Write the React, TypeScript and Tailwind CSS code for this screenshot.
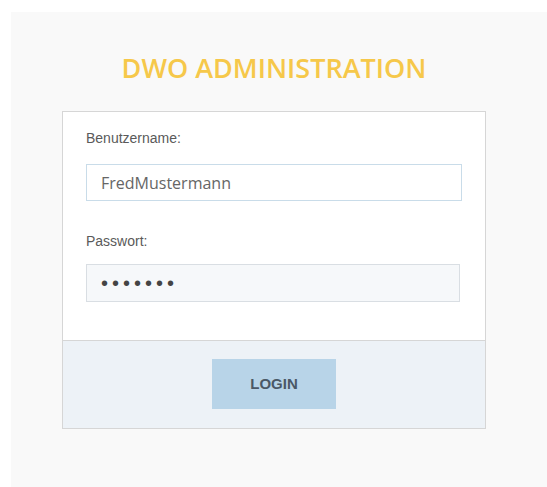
import { useState } from "react"

export default function App() {
  const [username, setUsername] = useState("FredMustermann")
  const [password, setPassword] = useState("1234567")

  return (
    <div className="bg-white pl-[11px] pt-[12px] font-['Liberation_Sans',Arial,sans-serif]">
      <div className="h-[475px] bg-[#f9f9f9] pt-[39px]">
        <div className="ml-[51px] w-[424px]">
          {/* Heading */}
          <h1 className="text-center font-['Open_Sans',sans-serif] text-[27px] font-semibold leading-[34px] text-[#f6c84a]">
            DWO ADMINISTRATION
          </h1>

          {/* Login card */}
          <form
            className="mt-[26px] border border-[#d6d6d6] bg-white"
            onSubmit={(e) => e.preventDefault()}
          >
            <div className="px-[23px] pt-[18px] pb-[38px]">
              <label className="block text-[14px] leading-[17px] text-[#5a5a5a]">Benutzername:</label>
              <input
                value={username}
                onChange={(e) => setUsername(e.target.value)}
                className="mt-[17px] block h-[37px] w-full border border-[#c9dce9] bg-white px-[14px] font-['Open_Sans',sans-serif] text-[16px] text-[#666] outline-none"
              />

              <label className="mt-[32px] block text-[14px] leading-[17px] text-[#5a5a5a]">Passwort:</label>
              <input
                type="password"
                value={password}
                onChange={(e) => setPassword(e.target.value)}
                className="mt-[14px] block h-[38px] w-[374px] border border-[#d9dee3] bg-[#f6f8fa] px-[14px] text-[20px] tracking-[4px] text-[#444] outline-none"
              />
            </div>

            <div className="flex justify-center border-t border-[#d6d6d6] bg-[#edf2f7] pt-[18px] pb-[19px]">
              <button
                type="submit"
                className="h-[50px] w-[124px] bg-[#b8d4e8] text-[15px] font-bold text-[#4a5866]"
              >
                LOGIN
              </button>
            </div>
          </form>
        </div>
      </div>
    </div>
  )
}
